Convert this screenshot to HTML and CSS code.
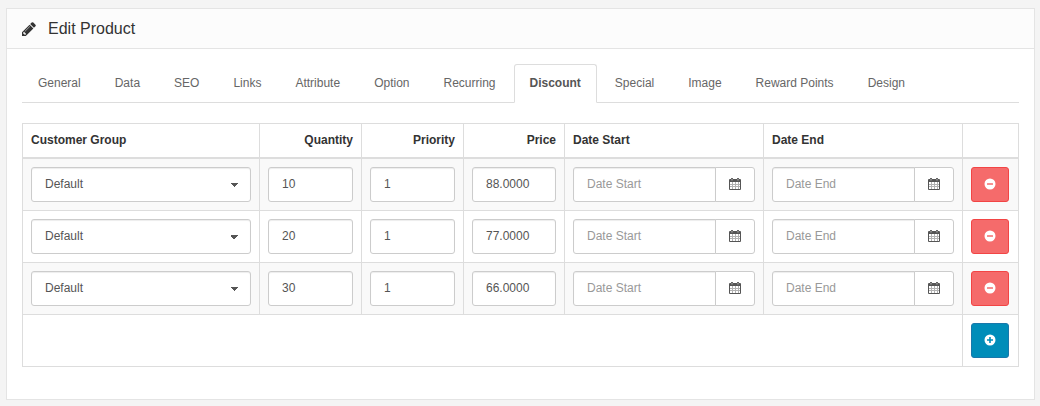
FILE: index.html
```html
<!DOCTYPE html>
<html lang="en">
<head>
<meta charset="utf-8">
<title>Edit Product</title>
<link rel="stylesheet" href="styles.css">
</head>
<body>
<svg class="sprite" aria-hidden="true">
  <symbol id="calendar" viewBox="0 0 12 12"><path fill-rule="evenodd" d="M1 1h1v-.5q0-.5.500-.5h1q.5 0 .5.500v.5h4v-.5q0-.5.500-.5h1q.5 0 .5.500v.5h1q1 0 1 1v9q0 1-1 1h-10q-1 0-1-1v-9q0-1 1-1zM1 4v7h10v-7zM2.700 1v1.500h.6v-1.500zM8.700 1v1.500h.6v-1.500z"/><path opacity=".45" d="M3 4h1v7h-1zM6 4h1v7h-1zM9 4h1v7h-1zM1 6h10v1h-10zM1 8h10v1h-10z"/></symbol>
  <symbol id="minus" viewBox="0 0 12 12"><path fill-rule="evenodd" d="M6 .5a5.500 5.500 0 1 0 0 11a5.500 5.500 0 0 0 0-11zM3.400 5.200h5.200q.4 0 .4.4v.8q0 .4-.4.4h-5.200q-.4 0-.4-.4v-.8q0-.4.4-.4z"/></symbol>
  <symbol id="plus" viewBox="0 0 12 12"><path fill-rule="evenodd" d="M6 .5a5.500 5.500 0 1 0 0 11a5.500 5.500 0 0 0 0-11zM5.200 3h1.600v2.200h2.200v1.600h-2.200v2.200h-1.600v-2.200h-2.200v-1.600h2.200z"/></symbol>
</svg>
<main class="panel">
  <header class="panel-heading">
    <svg class="pencil" viewBox="0 128 1536 1536" aria-hidden="true"><path d="M363 1536l91-91-235-235-91 91v107h128v128h107zm523-928q0-22-22-22-10 0-17 7l-542 542q-7 7-7 17 0 22 22 22 10 0 17-7l542-542q7-7 7-17zm-54-192l416 416-832 832h-416v-416zm683 96q0 53-37 90l-166 166-416-416 166-165q36-38 90-38 53 0 91 38l235 234q37 39 37 91z"/></svg>
    <h1 class="title">Edit Product</h1>
  </header>
  <div class="panel-body">
    <nav class="tabs">
      <a class="tab" href="#general">General</a>
      <a class="tab" href="#data">Data</a>
      <a class="tab" href="#seo">SEO</a>
      <a class="tab" href="#links">Links</a>
      <a class="tab" href="#attribute">Attribute</a>
      <a class="tab" href="#option">Option</a>
      <a class="tab" href="#recurring">Recurring</a>
      <a class="tab active" href="#discount" aria-current="page">Discount</a>
      <a class="tab" href="#special">Special</a>
      <a class="tab" href="#image">Image</a>
      <a class="tab" href="#reward">Reward Points</a>
      <a class="tab" href="#design">Design</a>
    </nav>
    <table class="discounts">
      <colgroup><col><col class="col-number"><col class="col-number"><col class="col-price"><col class="col-date"><col class="col-date"><col class="col-action"></colgroup>
      <thead>
        <tr><th>Customer Group</th><th class="right">Quantity</th><th class="right">Priority</th><th class="right">Price</th><th>Date Start</th><th>Date End</th><td></td></tr>
      </thead>
      <tbody>
        <tr>
          <td><select class="control" aria-label="Customer Group"><option>Default</option></select></td>
          <td><input class="control" type="text" value="10" aria-label="Quantity"></td>
          <td><input class="control" type="text" value="1" aria-label="Priority"></td>
          <td><input class="control" type="text" value="88.0000" aria-label="Price"></td>
          <td><div class="group"><input class="control" type="text" placeholder="Date Start" aria-label="Date Start"><button class="btn pick" type="button" aria-label="Choose start date"><svg class="icon"><use href="#calendar"/></svg></button></div></td>
          <td><div class="group"><input class="control" type="text" placeholder="Date End" aria-label="Date End"><button class="btn pick" type="button" aria-label="Choose end date"><svg class="icon"><use href="#calendar"/></svg></button></div></td>
          <td><button class="btn danger" type="button" aria-label="Remove"><svg class="icon"><use href="#minus"/></svg></button></td>
        </tr>
        <tr>
          <td><select class="control" aria-label="Customer Group"><option>Default</option></select></td>
          <td><input class="control" type="text" value="20" aria-label="Quantity"></td>
          <td><input class="control" type="text" value="1" aria-label="Priority"></td>
          <td><input class="control" type="text" value="77.0000" aria-label="Price"></td>
          <td><div class="group"><input class="control" type="text" placeholder="Date Start" aria-label="Date Start"><button class="btn pick" type="button" aria-label="Choose start date"><svg class="icon"><use href="#calendar"/></svg></button></div></td>
          <td><div class="group"><input class="control" type="text" placeholder="Date End" aria-label="Date End"><button class="btn pick" type="button" aria-label="Choose end date"><svg class="icon"><use href="#calendar"/></svg></button></div></td>
          <td><button class="btn danger" type="button" aria-label="Remove"><svg class="icon"><use href="#minus"/></svg></button></td>
        </tr>
        <tr>
          <td><select class="control" aria-label="Customer Group"><option>Default</option></select></td>
          <td><input class="control" type="text" value="30" aria-label="Quantity"></td>
          <td><input class="control" type="text" value="1" aria-label="Priority"></td>
          <td><input class="control" type="text" value="66.0000" aria-label="Price"></td>
          <td><div class="group"><input class="control" type="text" placeholder="Date Start" aria-label="Date Start"><button class="btn pick" type="button" aria-label="Choose start date"><svg class="icon"><use href="#calendar"/></svg></button></div></td>
          <td><div class="group"><input class="control" type="text" placeholder="Date End" aria-label="Date End"><button class="btn pick" type="button" aria-label="Choose end date"><svg class="icon"><use href="#calendar"/></svg></button></div></td>
          <td><button class="btn danger" type="button" aria-label="Remove"><svg class="icon"><use href="#minus"/></svg></button></td>
        </tr>
      </tbody>
      <tfoot>
        <tr><td colspan="6"></td><td><button class="btn primary" type="button" aria-label="Add discount"><svg class="icon"><use href="#plus"/></svg></button></td></tr>
      </tfoot>
    </table>
  </div>
</main>
</body>
</html>
```

FILE: styles.css
```css
* { box-sizing: border-box; }
body {
  margin: 0;
  padding: 8px 5px 6px 6px;
  background: #f4f4f4;
  color: #666;
  font: 12px/17px "Liberation Sans", Arial, sans-serif;
}
.sprite { display: none; }
.panel { background: #fff; border: 1px solid #e4e4e4; }
.panel-heading {
  display: flex;
  align-items: center;
  gap: 12px;
  height: 40px;
  padding: 0 15px;
  background: #fcfcfc;
  border-bottom: 1px solid #e4e4e4;
  color: #333;
}
.pencil { width: 14px; height: 14px; fill: currentColor; }
.title { margin: 0; font-size: 16px; font-weight: 400; line-height: 20px; }
.panel-body { padding: 15px 15px 32px; }
.tabs { display: flex; gap: 2px; margin-bottom: 20px; border-bottom: 1px solid #ddd; }
.tab {
  margin-bottom: -1px;
  padding: 10px 15px;
  border: 1px solid transparent;
  border-radius: 3px 3px 0 0;
  color: #666;
  text-decoration: none;
}
.active { background: #fff; border-color: #ddd #ddd #fff; color: #555; font-weight: 700; }
.discounts { width: 100%; table-layout: fixed; border-collapse: collapse; }
.col-number { width: 102px; }
.col-price { width: 101px; }
.col-date { width: 199px; }
.col-action { width: 56px; }
.discounts th, .discounts td { padding: 8px; border: 1px solid #ddd; text-align: left; }
.discounts thead th, .discounts thead td { border-bottom-width: 2px; color: #333; }
.discounts .right { text-align: right; }
.discounts tbody tr:nth-child(odd) { background: #f9f9f9; }
.control {
  display: block;
  width: 100%;
  height: 35px;
  padding: 7px 13px 9px;
  border: 1px solid #ccc;
  border-radius: 3px;
  background-color: #fff;
  box-shadow: inset 0 1px 1px rgba(0, 0, 0, .075);
  color: #555;
  font: inherit;
}
.control::placeholder { color: #999; opacity: 1; }
select.control {
  appearance: none;
  padding: 8px 13px;
  background-image: conic-gradient(from -45deg at 50% 100%, #555 90deg, transparent 0);
  background-position: right 12px top 15px;
  background-repeat: no-repeat;
  background-size: 8px 4px;
}
.btn {
  display: flex;
  align-items: center;
  justify-content: center;
  width: 38px;
  height: 35px;
  padding: 0 0 1px;
  border: 1px solid #ccc;
  border-radius: 3px;
  background: #fff;
  color: #555;
}
.icon { width: 12px; height: 12px; fill: currentColor; }
.group { display: flex; }
.group .control { flex: 1; min-width: 0; border-radius: 3px 0 0 3px; }
.pick { flex: none; width: 40px; margin-left: -1px; border-radius: 0 3px 3px 0; }
.danger { background: #f56b6b; border-color: #f24545; color: #fff; }
.primary { background: #008db9; border-color: #1978ab; color: #fff; }
```
